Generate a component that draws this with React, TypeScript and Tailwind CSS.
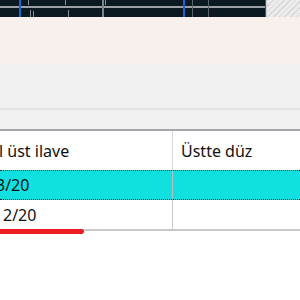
export default function App() {
  return (
    <div className="w-[300px] h-[300px] overflow-hidden bg-white flex flex-col" style={{ fontFamily: '"Noto Sans", "Liberation Sans", sans-serif' }}>
      {/* timeline strip */}
      <div className="h-[17px] flex shrink-0">
        <svg width="266" height="17" className="block bg-[#0a1a20] shrink-0">
          <rect x="0" y="6" width="266" height="2" fill="#9aa0a4" />
          <rect x="19" y="0" width="2" height="17" fill="#1a64d8" />
          <rect x="28" y="0" width="1" height="5" fill="#8a9096" />
          <rect x="30" y="10" width="1" height="7" fill="#8a9096" />
          <rect x="33" y="11" width="1" height="6" fill="#8a9096" />
          <rect x="65" y="0" width="1" height="5" fill="#8a9096" />
          <rect x="68" y="10" width="1" height="7" fill="#8a9096" />
          <rect x="102" y="0" width="2" height="17" fill="#7d8388" />
          <rect x="105" y="0" width="1" height="5" fill="#8a9096" />
          <rect x="183" y="0" width="2" height="17" fill="#1a64d8" />
          <rect x="192" y="0" width="1" height="17" fill="#5e6468" />
          <rect x="208" y="0" width="1" height="17" fill="#5e6468" />
          <rect x="265" y="0" width="1" height="17" fill="#6a3a9a" />
        </svg>
        <div className="flex-1 bg-[#e4e4e4] border-l border-[#d0d0d0]" style={{ backgroundImage: 'repeating-linear-gradient(135deg, #d8d8d8 0 1px, #ececec 1px 4px)' }} />
      </div>
      <div className="h-[48px] bg-[#f8f0ec] shrink-0" />
      <div className="h-[43px] bg-[#f0f0f0] shrink-0" />
      <div className="h-[2px] bg-[#e3e3e3] shrink-0" />
      <div className="h-[21px] bg-[#f0f0f0] shrink-0 border-b-2 border-[#a3a7ab]" />
      {/* table */}
      <div className="flex flex-col text-[16px] text-[#111] shrink-0">
        <div className="h-[39px] flex">
          <div className="w-[173px] shrink-0 border-r border-[#d8d8d8] flex items-center overflow-hidden whitespace-nowrap">
            <span className="-ml-[1px]">l üst ilave</span>
          </div>
          <div className="flex-1 flex items-center pl-[8px] whitespace-nowrap">Üstte düz</div>
        </div>
        <div className="h-[30px] flex bg-[#11e0e0] border-y border-dotted border-[#222]">
          <div className="w-[173px] shrink-0 border-r border-[#bcbcbc] flex items-center overflow-hidden whitespace-nowrap">
            <span className="-ml-[4px]">3/20</span>
          </div>
          <div className="flex-1" />
        </div>
        <div className="h-[31px] flex border-b-2 border-[#c8c8c8]">
          <div className="w-[173px] shrink-0 border-r border-[#c8c8c8] flex items-center pl-[3px]">2/20</div>
          <div className="flex-1" />
        </div>
        <div className="h-[5px] w-[84px] bg-[#ee1c25] rounded-r-sm -mt-[2px]" />
      </div>
    </div>
  );
}
